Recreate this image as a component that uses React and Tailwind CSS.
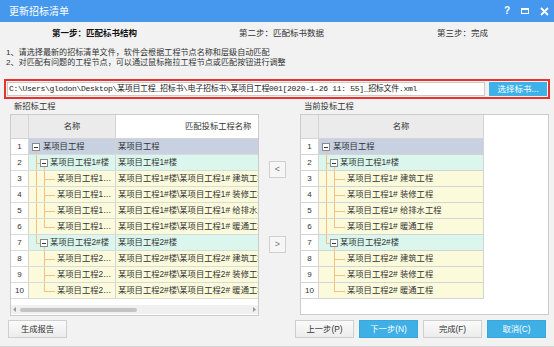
import React from "react";

const LINE = "bg-[#f5c07f]";

const rows = [
  { n: 1, lvl: 0, name: "某项目工程", match: "某项目工程", right: "某项目工程", tone: "blue" },
  { n: 2, lvl: 1, name: "某项目工程1#楼", match: "某项目工程1#楼", right: "某项目工程1#楼", tone: "mint" },
  { n: 3, lvl: 2, name: "某项目工程1…", match: "某项目工程1#楼\\某项目工程1# 建筑工程", right: "某项目工程1# 建筑工程", tone: "yellow" },
  { n: 4, lvl: 2, name: "某项目工程1…", match: "某项目工程1#楼\\某项目工程1# 装修工程", right: "某项目工程1# 装修工程", tone: "yellow" },
  { n: 5, lvl: 2, name: "某项目工程1…", match: "某项目工程1#楼\\某项目工程1# 给排水工程", right: "某项目工程1# 给排水工程", tone: "yellow" },
  { n: 6, lvl: 2, name: "某项目工程1…", match: "某项目工程1#楼\\某项目工程1# 暖通工程", right: "某项目工程1# 暖通工程", tone: "yellow", last: true },
  { n: 7, lvl: 1, name: "某项目工程2#楼", match: "某项目工程2#楼", right: "某项目工程2#楼", tone: "mint", last: true },
  { n: 8, lvl: 2, name: "某项目工程2…", match: "某项目工程2#楼\\某项目工程2# 建筑工程", right: "某项目工程2# 建筑工程", tone: "yellow", parentLast: true },
  { n: 9, lvl: 2, name: "某项目工程2…", match: "某项目工程2#楼\\某项目工程2# 装修工程", right: "某项目工程2# 装修工程", tone: "yellow", parentLast: true },
  { n: 10, lvl: 2, name: "某项目工程2…", match: "某项目工程2#楼\\某项目工程2# 暖通工程", right: "某项目工程2# 暖通工程", tone: "yellow", parentLast: true, last: true },
];

const toneBg = {
  blue: "bg-[#c7d1e1]",
  mint: "bg-[#dbf6ec]",
  yellow: "bg-[#fbfbdc]",
};

function MinusBox({ left }) {
  return (
    <span
      className={`absolute top-[4px] ${left} w-[8px] h-[8px] border border-[#8a8a8a] bg-white flex items-center justify-center`}
    >
      <span className="w-[4px] h-[1px] bg-[#333]" />
    </span>
  );
}

function TreeName({ row }) {
  const pad = row.lvl === 0 ? "pl-[14px]" : row.lvl === 1 ? "pl-[21px]" : "pl-[28px]";
  return (
    <div className={`relative h-full flex items-center ${pad} whitespace-nowrap overflow-hidden`}>
      {row.lvl === 0 && (
        <>
          <MinusBox left="left-[3px]" />
          <span className={`absolute left-[7px] top-[12px] bottom-0 w-[1px] ${LINE}`} />
        </>
      )}
      {row.lvl === 1 && (
        <>
          <span className={`absolute left-[7px] top-0 w-[1px] ${LINE} ${row.last ? "h-[8px]" : "h-full"}`} />
          <span className={`absolute left-[7px] top-[8px] w-[4px] h-[1px] ${LINE}`} />
          <MinusBox left="left-[11px]" />
          <span className={`absolute left-[15px] top-[12px] bottom-0 w-[1px] ${LINE}`} />
        </>
      )}
      {row.lvl === 2 && (
        <>
          {!row.parentLast && <span className={`absolute left-[7px] top-0 h-full w-[1px] ${LINE}`} />}
          <span className={`absolute left-[15px] top-0 w-[1px] ${LINE} ${row.last ? "h-[8px]" : "h-full"}`} />
          <span className={`absolute left-[15px] top-[8px] w-[11px] h-[1px] ${LINE}`} />
        </>
      )}
      <span className="relative">{row.name}</span>
    </div>
  );
}

function Btn({ children, blue, className = "" }) {
  return (
    <button
      className={`h-[18px] w-[59px] flex items-center justify-center text-[8.3px] border ${
        blue
          ? "bg-[#3fb0e6] border-[#3aa6da] text-white"
          : "bg-gradient-to-b from-[#fbfbfb] to-[#ececec] border-[#cfcfcf] text-[#333]"
      } ${className}`}
    >
      {children}
    </button>
  );
}

export default function App() {
  return (
    <div className="w-[554px] h-[347px] bg-[#f2f2f2] text-[#333] text-[8.3px] font-['Liberation_Sans','Noto_Sans_CJK_SC',sans-serif] flex flex-col border-b border-[#d6d6d6] overflow-hidden">
      {/* title bar */}
      <div className="h-[22px] bg-[#4598ee] flex items-center justify-between pl-[9px] pr-[5px] text-white shrink-0">
        <span className="text-[10px]">更新招标清单</span>
        <div className="flex items-center gap-[11px] font-bold">
          <span className="text-[10px] leading-none">?</span>
          <span className="w-[8px] h-[6px] border border-white border-t-[2px]" />
          <svg width="9" height="9" viewBox="0 0 9 9">
            <path d="M1 1 L8 8 M8 1 L1 8" stroke="white" strokeWidth="1.8" />
          </svg>
        </div>
      </div>

      {/* steps */}
      <div className="h-[22px] flex items-center shrink-0 text-[8.5px]">
        <span className="ml-[52px] w-[187px] font-bold text-[#111]">第一步：匹配标书结构</span>
        <span className="w-[198px]">第二步：匹配标书数据</span>
        <span>第三步：完成</span>
      </div>

      {/* instructions */}
      <div className="mt-[4px] pl-[6px] leading-[10px] shrink-0 text-[8.1px]">
        <div>1、请选择最新的招标清单文件，软件会根据工程节点名称和层级自动匹配</div>
        <div>2、对匹配有问题的工程节点，可以通过鼠标拖拉工程节点或匹配按钮进行调整</div>
      </div>

      {/* path */}
      <div className="mt-[11px] mx-[4px] h-[20px] border-2 border-[#e8322e] p-[1px] flex gap-[4px] shrink-0">
        <div className="w-[478px] h-full bg-white border border-[#c9c9c9] flex items-center pl-[1px] overflow-hidden whitespace-nowrap text-[8px] tracking-[-0.3px] font-['Liberation_Mono','Noto_Sans_CJK_SC',monospace] text-[#222]">
          C:\Users\glodon\Desktop\某项目工程_招标书\电子招标书\某项目工程001[2020-1-26 11: 55]_招标文件.xml
        </div>
        <button className="w-[58px] h-full bg-[#3db1e8] text-white text-[8.5px] flex items-center justify-center">
          选择标书...
        </button>
      </div>

      {/* labels */}
      <div className="h-[15px] flex items-center shrink-0">
        <span className="ml-[14px] w-[290px]">新招标工程</span>
        <span>当前投标工程</span>
      </div>

      {/* tables */}
      <div className="flex h-[202px] shrink-0">
        {/* left table */}
        <div className="ml-[10px] w-[249px] h-full border border-[#cbcbcb] bg-white flex flex-col overflow-hidden">
          <div className="h-[24px] flex shrink-0 border-b border-[#d4d4d4]">
            <div className="w-[18px] bg-[#ebebeb] border-r border-[#d4d4d4]" />
            <div className="w-[87px] bg-[#ebebeb] border-r border-[#d4d4d4] flex items-center justify-center">名称</div>
            <div className="flex-1 bg-white flex items-center pl-[69px] whitespace-nowrap">匹配投标工程名称</div>
          </div>
          {rows.map((r) => (
            <div key={r.n} className="h-[16px] flex shrink-0 border-b border-[#dadada]">
              <div className="w-[18px] bg-white border-r border-[#d4d4d4] flex items-center justify-center text-[8px]">{r.n}</div>
              <div className={`w-[87px] border-r border-[#d4d4d4] ${toneBg[r.tone]}`}>
                <TreeName row={r} />
              </div>
              <div className={`flex-1 ${toneBg[r.tone]} flex items-center pl-[2px] whitespace-nowrap overflow-hidden`}>
                {r.match}
              </div>
            </div>
          ))}
          <div className="flex-1" />
          <div className="h-[9px] bg-[#f0f0f0] flex items-center px-[2px] shrink-0 mb-[1px]">
            <svg width="4" height="5" viewBox="0 0 4 5">
              <path d="M3 0 L0 2.5 L3 5 Z" fill="#9a9a9a" />
            </svg>
            <div className="ml-[3px] w-[117px] h-[4px] rounded-full bg-[#c4c4c4]" />
            <div className="flex-1" />
            <svg width="4" height="5" viewBox="0 0 4 5">
              <path d="M1 0 L4 2.5 L1 5 Z" fill="#9a9a9a" />
            </svg>
          </div>
        </div>

        {/* middle buttons */}
        <div className="w-[41px] flex flex-col pl-[10px] pt-[47px] gap-[58px]">
          <button className="w-[17px] h-[17px] border border-[#cfcfcf] bg-[#f6f6f6] text-[#777] text-[9px] flex items-center justify-center">&lt;</button>
          <button className="w-[17px] h-[17px] border border-[#cfcfcf] bg-[#f6f6f6] text-[#777] text-[9px] flex items-center justify-center">&gt;</button>
        </div>

        {/* right table */}
        <div className="w-[249px] h-[201px] border border-[#cbcbcb] bg-white flex flex-col overflow-hidden">
          <div className="h-[24px] flex shrink-0">
            <div className="w-[18px] bg-[#ebebeb] border-r border-b border-[#d4d4d4]" />
            <div className="w-[165px] bg-[#ebebeb] border-r border-b border-[#d4d4d4] flex items-center justify-center">名称</div>
          </div>
          {rows.map((r) => (
            <div key={r.n} className="h-[16px] flex shrink-0">
              <div className="w-[18px] bg-white border-r border-b border-[#d4d4d4] flex items-center justify-center text-[8px]">{r.n}</div>
              <div className={`w-[165px] border-r border-b border-[#d4d4d4] ${toneBg[r.tone]}`}>
                <TreeName row={{ ...r, name: r.right }} />
              </div>
            </div>
          ))}
        </div>
      </div>

      {/* bottom buttons */}
      <div className="mt-[4px] flex shrink-0">
        <Btn className="ml-[8px]">生成报告</Btn>
        <div className="ml-[228px] flex gap-[5px]">
          <Btn>上一步(P)</Btn>
          <Btn blue>下一步(N)</Btn>
          <Btn>完成(F)</Btn>
          <Btn blue>取消(C)</Btn>
        </div>
      </div>
    </div>
  );
}
